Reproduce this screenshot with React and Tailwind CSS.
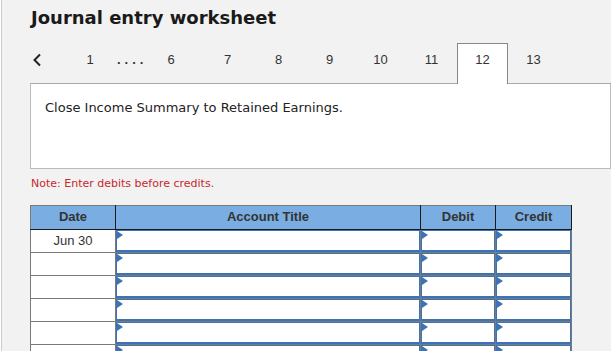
const verdana = { fontFamily: '"DejaVu Sans", Verdana, sans-serif' }

function Flag() {
  return (
    <span className="absolute left-0 top-0 h-0 w-0 border-y-[4px] border-l-[6px] border-y-transparent border-l-[#3d72b5]" />
  )
}

function InputCell({ w }) {
  return (
    <td className={`${w} border border-[#7a7a7a] p-0`}>
      <div className="relative h-[22px] border-x border-t border-b-2 border-[#3d72b5] bg-white">
        <Flag />
      </div>
    </td>
  )
}

export default function App() {
  const rows = ['Jun 30', '', '', '', '', '']
  const tabs = ['7', '8', '9', '10', '11', '12', '13']

  return (
    <div className="h-[351px] w-[611px] overflow-hidden bg-white pl-px">
      <div className="h-full border-l border-[#cccccc] bg-[#f2f2f2] pt-[7px]">
        <h1
          className="pl-[29px] text-[18px] font-bold leading-[22px] text-[#1a1a1a]"
          style={verdana}
        >
          Journal entry worksheet
        </h1>

        <div className="ml-[28px] mt-[15px] flex h-[40px] items-end border-b border-[#aaaaaa] font-['Liberation_Sans',Arial,sans-serif] text-[13px] text-[#333]">
          <div className="flex h-full w-[14px] items-center justify-center pb-[8px]">
            <svg width="10" height="14" viewBox="0 0 10 14">
              <path d="M8 1.5 L2.5 7 L8 12.5" fill="none" stroke="#222" strokeWidth="2" />
            </svg>
          </div>
          <div className="ml-[21px] flex h-full w-[50px] items-center justify-center pb-[7px]">1</div>
          <div className="flex h-full w-[33px] items-center pb-[7px] pl-[2px] font-bold tracking-[4px]">....</div>
          <div className="mr-[8px] flex h-full w-[46px] items-center justify-center pb-[7px]">6</div>
          {tabs.map((t) => (
            <div
              key={t}
              className={
                t === '12'
                  ? 'relative -mb-px flex h-[41px] w-[51px] items-center justify-center border-x border-t border-[#888] bg-white pb-[8px]'
                  : 'flex h-full w-[51px] items-center justify-center pb-[7px]'
              }
            >
              {t}
            </div>
          ))}
        </div>

        <div className="ml-[28px] flex h-[85px] items-start border-x border-b border-[#bbbbbb] bg-white px-[14px] pt-[14px]">
          <p className="text-[13px] text-[#222]" style={verdana}>
            Close Income Summary to Retained Earnings.
          </p>
        </div>

        <p className="ml-[29px] mt-[7px] text-[11px] text-[#c8282d]" style={verdana}>
          Note: Enter debits before credits.
        </p>

        <table className="ml-[28px] mt-[12px] border-collapse font-['Liberation_Sans',Arial,sans-serif] text-[13px] text-[#333]">
          <thead>
            <tr className="h-[24px] bg-[#7aaee3] font-bold">
              <th className="w-[85px] border border-[#7a7a7a] border-b-[#1a1a1a] border-r-[#1a1a1a]">Date</th>
              <th className="w-[305px] border border-[#7a7a7a] border-b-[#1a1a1a] border-r-[#1a1a1a]">Account Title</th>
              <th className="w-[75px] border border-[#7a7a7a] border-b-[#1a1a1a] border-r-[#1a1a1a]">Debit</th>
              <th className="w-[76px] border border-[#7a7a7a] border-b-[#1a1a1a] border-r-[#1a1a1a]">Credit</th>
            </tr>
          </thead>
          <tbody>
            {rows.map((d, i) => (
              <tr key={i}>
                <td className="h-[23px] w-[85px] border border-[#7a7a7a] bg-white p-0 text-center font-normal">
                  {d}
                </td>
                <InputCell w="w-[305px]" />
                <InputCell w="w-[75px]" />
                <InputCell w="w-[76px]" />
              </tr>
            ))}
          </tbody>
        </table>
      </div>
    </div>
  )
}
